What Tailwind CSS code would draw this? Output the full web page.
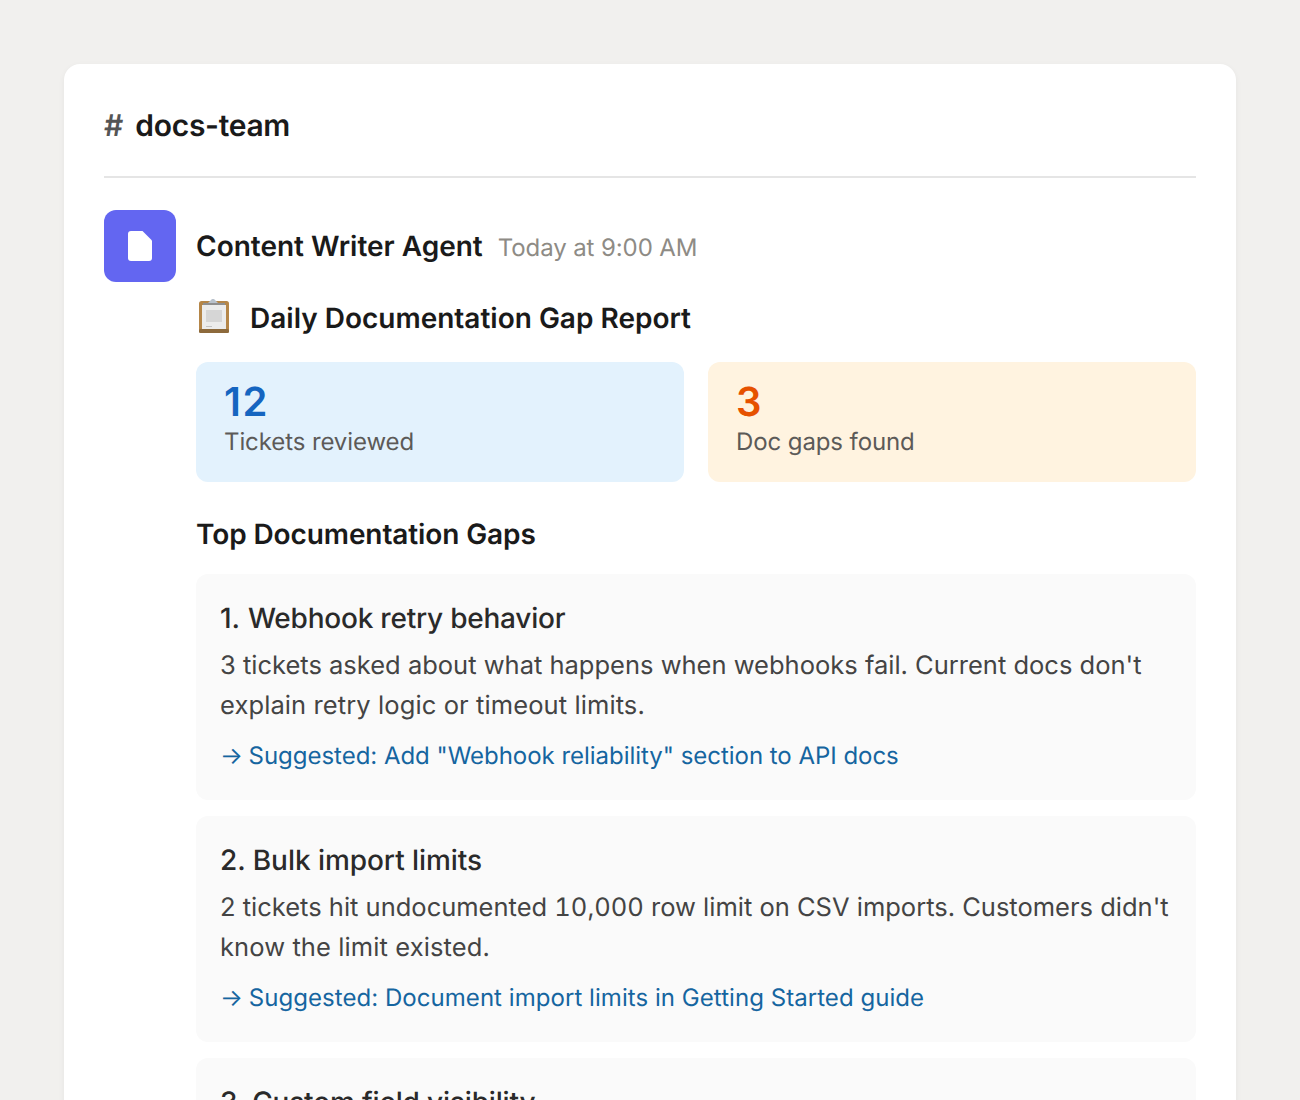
<!DOCTYPE html>
<html lang="en">
<head>
  <meta charset="UTF-8">
  <title>docs-team</title>
  <script src="https://cdn.jsdelivr.net/npm/@tailwindcss/browser@4"></script>
</head>
<body class="bg-[#f1f0ee] h-[1100px] overflow-hidden font-['Inter',sans-serif] [text-rendering:geometricPrecision] p-16">
  <div class="bg-white rounded-[16px] shadow-[0_2px_6px_rgba(0,0,0,0.05)] px-10 pt-10 pb-10 h-[1100px]">
    <div class="flex items-center gap-3 h-[44px] mb-[28px] text-[30px] leading-[44px]">
      <span class="font-semibold text-[#555555]">#</span>
      <span class="font-semibold text-[#1a1a1a] tracking-[-0.3px]">docs-team</span>
    </div>
    <div class="h-[2px] bg-[#e5e5e5] mb-8"></div>

    <div class="flex gap-5">
      <div class="w-[72px] h-[72px] shrink-0 rounded-[12px] bg-[#6366f1] flex items-center justify-center">
        <svg width="24" height="30" viewBox="0 0 24 30"><path d="M3 0H14.5L24 9.5V27A3 3 0 0 1 21 30H3A3 3 0 0 1 0 27V3A3 3 0 0 1 3 0Z" fill="#fff"/></svg>
      </div>
      <div class="flex-1 min-w-0">
        <div class="flex items-baseline gap-[15px] mt-[15px] h-[38px]">
          <span class="text-[28px] font-semibold text-[#1a1a1a]">Content Writer Agent</span>
          <span class="text-[24px] tracking-[-0.1px] text-[#8e8b85]">Today at 9:00 AM</span>
        </div>

        <div class="flex items-center gap-4 mt-[35px] h-[40px]">
          <svg width="38" height="38" viewBox="0 0 38 38" class="shrink-0 -mt-[2px]">
            <rect x="3" y="3" width="30" height="32" rx="2.5" fill="#b58648"/>
            <rect x="3" y="31" width="30" height="4" rx="1.5" fill="#8d6a3c"/>
            <rect x="6" y="7" width="24" height="24" fill="#ececec"/>
            <rect x="10" y="12" width="16" height="12" fill="#d6d6d6"/>
            <rect x="10" y="28" width="6" height="1" fill="#c4c4c4"/>
            <rect x="7" y="5" width="22" height="2" fill="#8f8f8f"/>
            <path d="M12 5L16 1H18L22 5Z" fill="#b9c2cc"/>
          </svg>
          <span class="text-[28px] font-semibold text-[#1a1a1a]">Daily Documentation Gap Report</span>
        </div>

        <div class="grid grid-cols-2 gap-6 mt-[24px]">
          <div class="h-[120px] rounded-[12px] bg-[#e3f2fd] px-7 pt-[16px]">
            <div class="text-[40px] leading-[48px] font-semibold tracking-[1.5px] text-[#1565c0]">12</div>
            <div class="text-[24px] leading-[32px] tracking-[-0.1px] text-[#5c5a58]">Tickets reviewed</div>
          </div>
          <div class="h-[120px] rounded-[12px] bg-[#fff3e0] px-7 pt-[16px]">
            <div class="text-[40px] leading-[48px] font-semibold text-[#e65100]">3</div>
            <div class="text-[24px] leading-[32px] tracking-[-0.1px] text-[#5c5a58]">Doc gaps found</div>
          </div>
        </div>

        <h3 class="text-[28px] leading-[40px] tracking-[-0.1px] font-semibold text-[#1a1a1a] mt-[32px] mb-[20px]">Top Documentation Gaps</h3>

        <div class="flex flex-col gap-4">
          <div class="h-[226px] rounded-[12px] bg-[#fafafa] px-6 pt-6">
            <div class="text-[28px] leading-[40px] tracking-[-0.22px] font-medium text-[#2a2a2a]"><span class="mr-px">1.</span> Webhook retry behavior</div>
            <p class="text-[25.5px] leading-[40px] text-[#444444] mt-[8px]">3 tickets asked about what happens when webhooks fail. Current docs don't <span class="tracking-[0.1px]">explain retry logic or timeout limits.</span></p>
            <div class="text-[24px] leading-[32px] tracking-[-0.03px] text-[#1565a0] mt-[14px]"><span class="-mr-px">→</span> Suggested: Add "Webhook reliability" section to API docs</div>
          </div>
          <div class="h-[226px] rounded-[12px] bg-[#fafafa] px-6 pt-6">
            <div class="text-[28px] leading-[40px] tracking-[-0.05px] font-medium text-[#2a2a2a]">2. Bulk import limits</div>
            <p class="text-[25.5px] leading-[40px] text-[#444444] mt-[8px]">2 tickets hit undocumented <span class="tabular-nums">10,000</span> row limit on CSV imports. Customers didn't <span class="tracking-[0.1px]">know the limit existed.</span></p>
            <div class="text-[24px] leading-[32px] tracking-[0.05px] text-[#1565a0] mt-[14px]"><span class="-mr-px">→</span> Suggested: Document import limits in Getting Started guide</div>
          </div>
          <div class="h-[226px] rounded-[12px] bg-[#fafafa] px-6 pt-6">
            <div class="text-[28px] leading-[40px] tracking-[-0.16px] font-medium text-[#2a2a2a]">3. Custom field visibility</div>
          </div>
        </div>
      </div>
    </div>
  </div>
</body>
</html>
